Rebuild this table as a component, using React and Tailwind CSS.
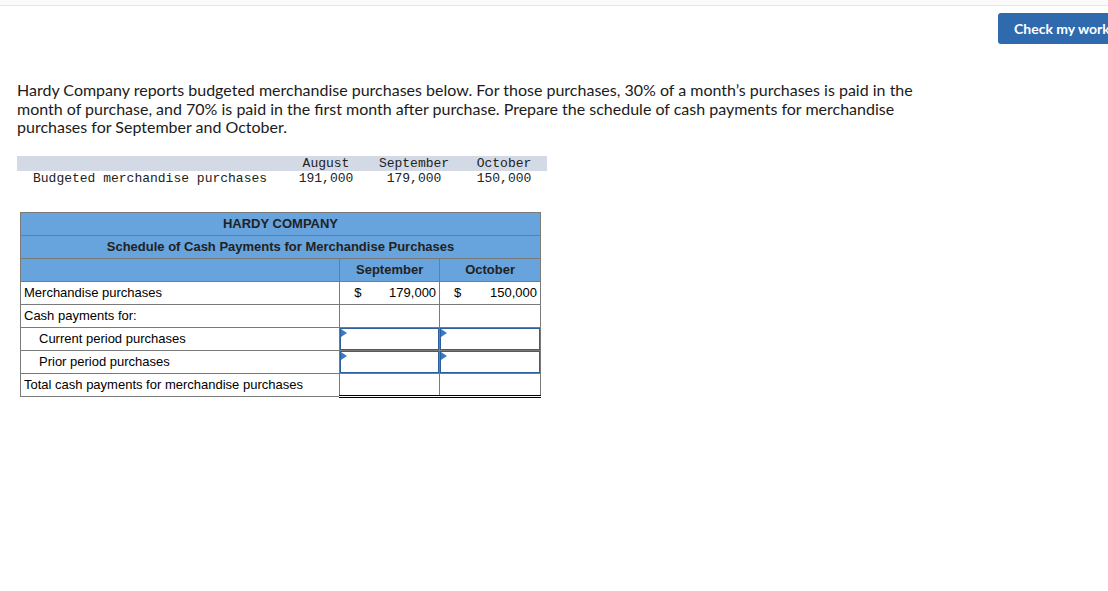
import React from 'react';

const budget = [
  { month: 'August', amount: '191,000' },
  { month: 'September', amount: '179,000' },
  { month: 'October', amount: '150,000' },
];

function Triangle() {
  return (
    <svg width="6" height="8" viewBox="0 0 6 8" className="absolute left-0 top-0">
      <path d="M0 0 L6 4 L0 8 Z" fill="#3a78cc" />
    </svg>
  );
}

function InputCell() {
  return (
    <td className="relative h-[23px] border border-[#7a7a7a] p-0">
      <div className="relative h-[22px] w-full border border-[#2c5f9e] bg-white">
        <Triangle />
      </div>
    </td>
  );
}

function AmountCell({ value }) {
  return (
    <td className="h-[23px] border border-[#7a7a7a] px-[3px]">
      <div className="flex justify-between pl-[11px]">
        <span>$</span>
        <span>{value}</span>
      </div>
    </td>
  );
}

export default function App() {
  return (
    <div className="relative min-h-[591px] w-full overflow-hidden bg-white font-['Lato',sans-serif] text-[#1b1b1b]">
      <div className="h-[6px] border-b border-[#e6e6e6] bg-[#fafafa]" />

      <div className="flex justify-end pt-[7px] -mr-[40px]">
        <button className="h-[31px] w-[150px] rounded-[3px] bg-[#2f6aaf] pl-[16px] text-left text-[14px] font-bold text-white">
          Check my work
        </button>
      </div>

      <p className="ml-[17px] mt-[37px] w-[912px] text-[16px] leading-[18.5px]">
        Hardy Company reports budgeted merchandise purchases below. For those purchases, 30% of a month’s purchases is paid in the
        month of purchase, and 70% is paid in the first month after purchase. Prepare the schedule of cash payments for merchandise
        purchases for September and October.
      </p>

      <div className="ml-[17px] mt-[19px] w-[530px] font-['Liberation_Mono',monospace] text-[13px] leading-[15px] text-[#222]">
        <div className="grid grid-cols-[268px_82px_94px_86px] bg-[#d3d9e5]">
          <div />
          {budget.map((b) => (
            <div key={b.month} className="text-center">{b.month}</div>
          ))}
        </div>
        <div className="grid grid-cols-[268px_82px_94px_86px]">
          <div className="pl-[16px]">Budgeted merchandise purchases</div>
          {budget.map((b) => (
            <div key={b.month} className="text-center">{b.amount}</div>
          ))}
        </div>
      </div>

      <table className="ml-[20px] mt-[26px] w-[521px] border-collapse font-['Liberation_Sans',Arial,sans-serif] text-[13px] text-black">
        <colgroup>
          <col className="w-[320px]" />
          <col className="w-[100px]" />
          <col className="w-[101px]" />
        </colgroup>
        <tbody>
          <tr className="bg-[#67a3dc] font-bold text-[#222]">
            <td colSpan={3} className="h-[23px] border border-[#7a7a7a] text-center">HARDY COMPANY</td>
          </tr>
          <tr className="bg-[#67a3dc] font-bold text-[#222]">
            <td colSpan={3} className="h-[23px] border border-[#7a7a7a] text-center">Schedule of Cash Payments for Merchandise Purchases</td>
          </tr>
          <tr className="bg-[#67a3dc] font-bold text-[#222]">
            <td className="h-[23px] border border-[#7a7a7a]" />
            <td className="h-[23px] border border-[#7a7a7a] text-center">September</td>
            <td className="h-[23px] border border-[#7a7a7a] text-center">October</td>
          </tr>
          <tr>
            <td className="h-[23px] border border-[#7a7a7a] pl-[3px]">Merchandise purchases</td>
            <AmountCell value="179,000" />
            <AmountCell value="150,000" />
          </tr>
          <tr>
            <td className="h-[23px] border border-[#7a7a7a] pl-[3px]">Cash payments for:</td>
            <td className="h-[23px] border border-[#7a7a7a]" />
            <td className="h-[23px] border border-[#7a7a7a]" />
          </tr>
          <tr>
            <td className="h-[23px] border border-[#7a7a7a] pl-[18px]">Current period purchases</td>
            <InputCell />
            <InputCell />
          </tr>
          <tr>
            <td className="h-[23px] border border-[#7a7a7a] pl-[18px]">Prior period purchases</td>
            <InputCell />
            <InputCell />
          </tr>
          <tr>
            <td className="h-[23px] border border-[#7a7a7a] pl-[3px]">Total cash payments for merchandise purchases</td>
            <td className="h-[23px] border-x border-t border-b-[3px] border-x-[#7a7a7a] border-t-black border-b-black [border-bottom-style:double]" />
            <td className="h-[23px] border-x border-t border-b-[3px] border-x-[#7a7a7a] border-t-black border-b-black [border-bottom-style:double]" />
          </tr>
        </tbody>
      </table>
    </div>
  );
}
